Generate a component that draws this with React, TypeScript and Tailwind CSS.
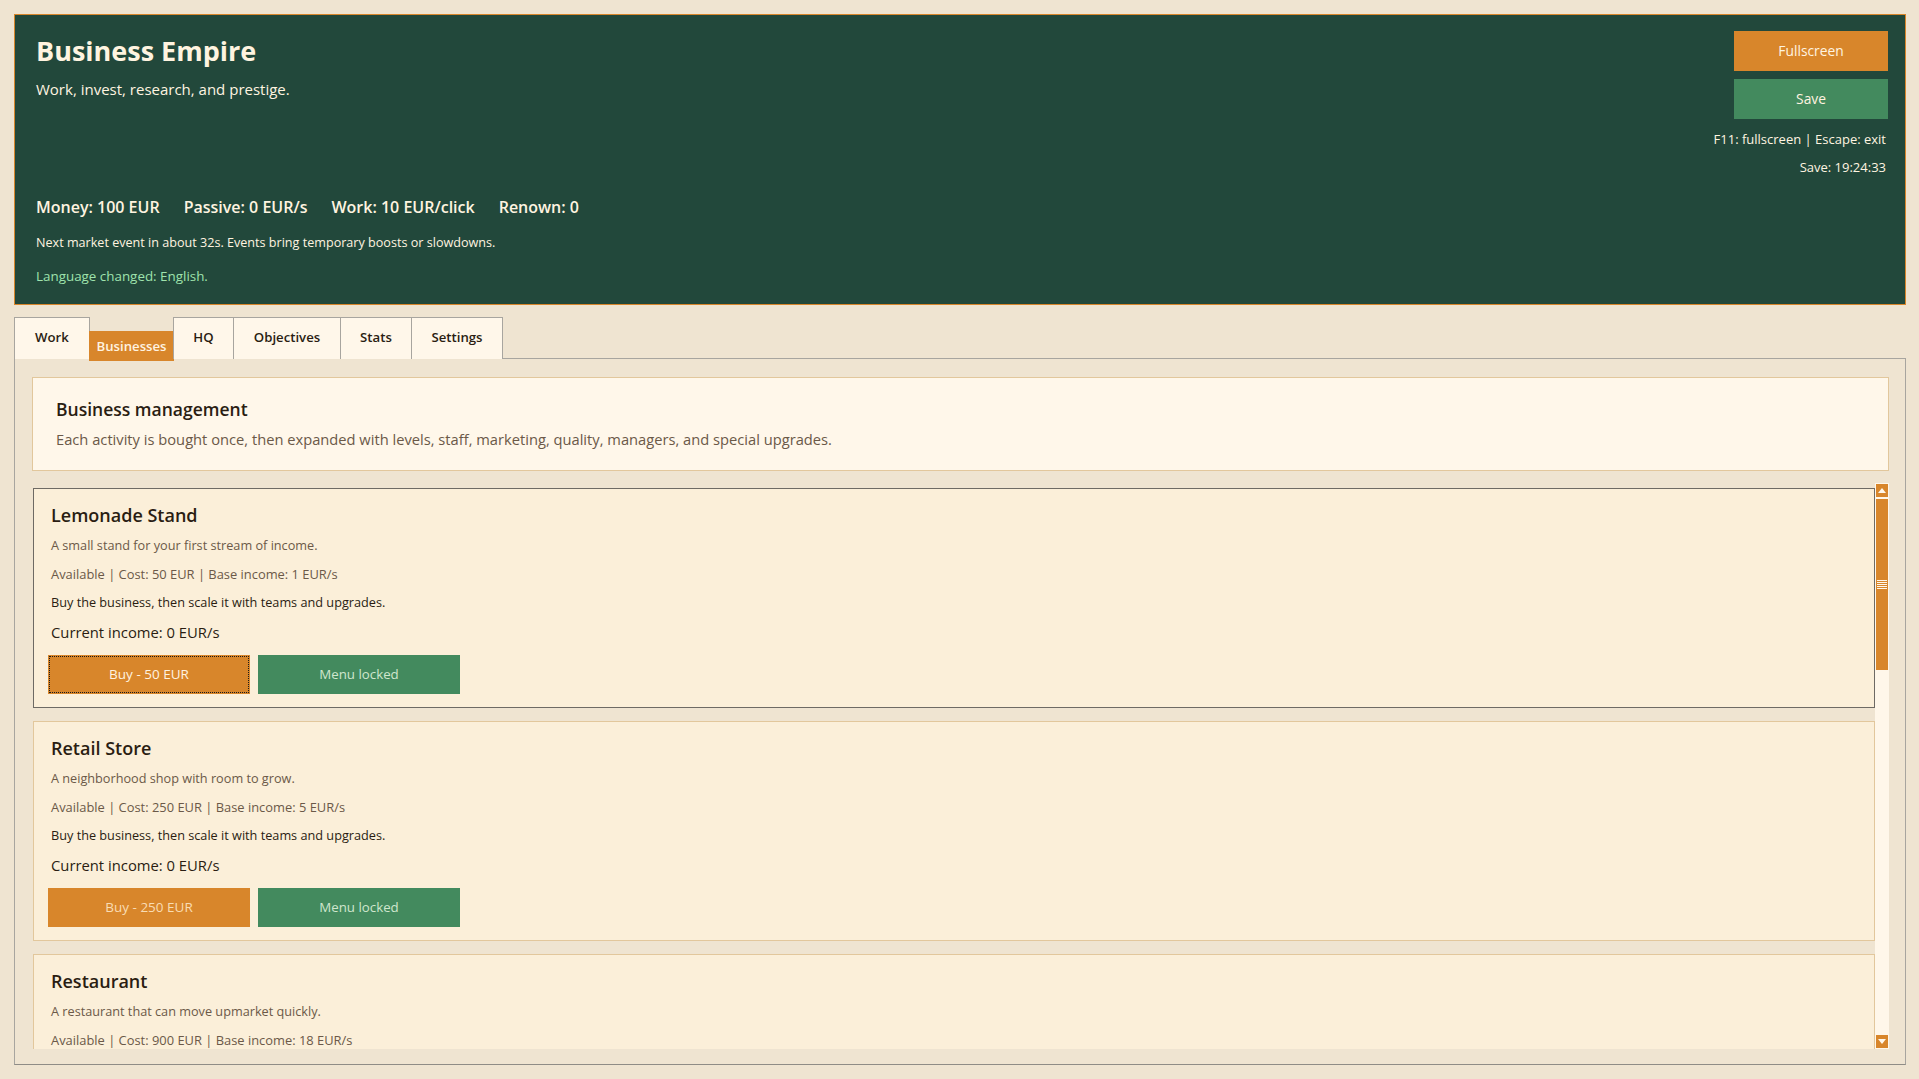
import React from "react";

type Biz = { name: string; desc: string; cost: number; income: number };

const businesses: Biz[] = [
  { name: "Lemonade Stand", desc: "A small stand for your first stream of income.", cost: 50, income: 1 },
  { name: "Retail Store", desc: "A neighborhood shop with room to grow.", cost: 250, income: 5 },
  { name: "Restaurant", desc: "A restaurant that can move upmarket quickly.", cost: 900, income: 18 },
];

const tabs = [
  { label: "Work", w: "w-[76px]" },
  { label: "Businesses", w: "w-[85px]" },
  { label: "HQ", w: "w-[61px]" },
  { label: "Objectives", w: "w-[108px]" },
  { label: "Stats", w: "w-[72px]" },
  { label: "Settings", w: "w-[92px]" },
];

function Card({ b, focused, money }: { b: Biz; focused: boolean; money: number }) {
  const affordable = money >= b.cost;
  return (
    <div
      className={
        "shrink-0 h-[220px] border bg-[#fbefd9] pl-[17px] pt-[14px] " +
        (focused ? "border-[#6e6a64]" : "border-[#e2c79c]")
      }
    >
      <div className="h-[24px] leading-[24px] text-[18px] font-semibold text-[#2a1d12]">{b.name}</div>
      <div className="mt-[9px] h-[18px] leading-[18px] text-[12.7px] text-[#6b5948]">{b.desc}</div>
      <div className="mt-[11px] h-[18px] leading-[18px] text-[12.9px] text-[#6b5948]">
        Available | Cost: {b.cost} EUR | Base income: {b.income} EUR/s
      </div>
      <div className="mt-[10px] h-[18px] leading-[18px] text-[12.7px] text-[#2a1d12]">
        Buy the business, then scale it with teams and upgrades.
      </div>
      <div className="mt-[11px] h-[20px] leading-[20px] text-[14.8px] text-[#2a1d12]">Current income: 0 EUR/s</div>
      <div className="mt-[13px] flex gap-[8px] -ml-[3px]">
        <div
          className={
            "w-[202px] h-[39px] bg-[#d8862b] flex items-center justify-center text-[13.5px] border border-[#d8862b] " +
            (focused ? "outline outline-1 outline-dotted outline-[#1a1a1a] -outline-offset-2 " : "") +
            (affordable ? "text-[#fff3e0]" : "text-[#f8dcb4]")
          }
        >
          Buy - {b.cost} EUR
        </div>
        <div className="w-[202px] h-[39px] bg-[#438a5e] flex items-center justify-center text-[13.3px] text-[#cfe6cd]">
          Menu locked
        </div>
      </div>
    </div>
  );
}

function Scrollbar() {
  return (
    <div className="w-[14px] shrink-0 bg-[#fff7ea] flex flex-col items-center">
      <div className="mt-px w-[12px] h-[13px] bg-[#d8862b] flex items-center justify-center">
        <svg width="8" height="5" viewBox="0 0 8 5">
          <path d="M4 0 L8 5 L0 5 Z" fill="#fff7ea" />
        </svg>
      </div>
      <div className="mt-[2px] w-[12px] h-[171px] bg-[#d8862b] flex flex-col items-center justify-center gap-[1px]">
        <div className="w-[10px] h-px bg-[#fff7ea]" />
        <div className="w-[10px] h-px bg-[#fff7ea]" />
        <div className="w-[10px] h-px bg-[#fff7ea]" />
        <div className="w-[10px] h-px bg-[#fff7ea]" />
        <div className="w-[10px] h-px bg-[#fff7ea]" />
      </div>
      <div className="flex-1" />
      <div className="mb-px w-[12px] h-[13px] bg-[#d8862b] flex items-center justify-center">
        <svg width="8" height="5" viewBox="0 0 8 5">
          <path d="M0 0 L8 0 L4 5 Z" fill="#fff7ea" />
        </svg>
      </div>
    </div>
  );
}

export default function App() {
  const money = 100;
  return (
    <div className="w-[1919px] h-[1079px] overflow-hidden bg-[#efe4d1] pt-[14px] pl-[14px] pr-[13px] font-['Open_Sans','Lato',sans-serif]">
      {/* Header */}
      <div className="h-[291px] border border-[#d8862b] bg-[#22483b] flex justify-between pl-[21px] pr-[17px]">
        <div className="pt-[20px] text-[#fff4e0]">
          <div className="h-[32px] leading-[32px] text-[27px] font-bold">Business Empire</div>
          <div className="mt-[12px] h-[20px] leading-[20px] text-[15px]">Work, invest, research, and prestige.</div>
          <div className="mt-[97px] h-[22px] leading-[22px] text-[16px] font-semibold flex gap-[24px]">
            <span>Money: 100 EUR</span>
            <span>Passive: 0 EUR/s</span>
            <span>Work: 10 EUR/click</span>
            <span>Renown: 0</span>
          </div>
          <div className="mt-[16px] h-[18px] leading-[18px] text-[12.6px]">
            Next market event in about 32s. Events bring temporary boosts or slowdowns.
          </div>
          <div className="mt-[15px] h-[18px] leading-[18px] text-[13.4px] text-[#9fe3ad]">Language changed: English.</div>
        </div>
        <div className="pt-[16px] flex flex-col items-end text-[#fff4e0]">
          <div className="w-[154px] h-[40px] bg-[#d8862b] flex items-center justify-center text-[13.8px]">Fullscreen</div>
          <div className="mt-[8px] w-[154px] h-[40px] bg-[#438a5e] flex items-center justify-center text-[13.8px]">Save</div>
          <div className="mt-[11px] h-[18px] leading-[18px] text-[13px] pr-[2px]">F11: fullscreen | Escape: exit</div>
          <div className="mt-[10px] h-[18px] leading-[18px] text-[13px] pr-[2px]">Save: 19:24:33</div>
        </div>
      </div>

      {/* Tabs */}
      <div className="mt-[12px] flex items-start h-[41px] relative z-10">
        {tabs.map((t, i) =>
          t.label === "Businesses" ? (
            <div
              key={t.label}
              className={`${t.w} -ml-px mt-[14px] h-[30px] bg-[#d8862b] text-[#fff3e0] text-[13.2px] font-semibold flex items-center justify-center pt-[1px]`}
            >
              {t.label}
            </div>
          ) : (
            <div
              key={t.label}
              className={`${t.w} ${i === 0 ? "" : "-ml-px"} h-[42px] bg-[#fff7ea] border border-b-0 border-[#a8a59f] text-[#2a1d12] text-[13.2px] font-semibold flex items-center justify-center pb-[2px]`}
            >
              {t.label}
            </div>
          )
        )}
      </div>

      {/* Panel */}
      <div className="h-[707px] border border-[#a8a59f] border-b-[#8f8c86] pl-[17px] pr-[16px] pt-[18px] flex flex-col">
        <div className="h-[94px] shrink-0 border border-[#e2c79c] bg-[#fff7ea] pl-[23px] pt-[19px]">
          <div className="h-[24px] leading-[24px] text-[17.5px] font-semibold text-[#2a1d12]">Business management</div>
          <div className="mt-[8px] h-[20px] leading-[20px] text-[14.7px] text-[#6b5948]">
            Each activity is bought once, then expanded with levels, staff, marketing, quality, managers, and special upgrades.
          </div>
        </div>
        <div className="mt-[12px] h-[566px] flex">
          <div className="flex-1 overflow-hidden pt-[5px] flex flex-col gap-[13px] pl-px">
            {businesses.map((b, i) => (
              <Card key={b.name} b={b} focused={i === 0} money={money} />
            ))}
          </div>
          <Scrollbar />
        </div>
      </div>
    </div>
  );
}
